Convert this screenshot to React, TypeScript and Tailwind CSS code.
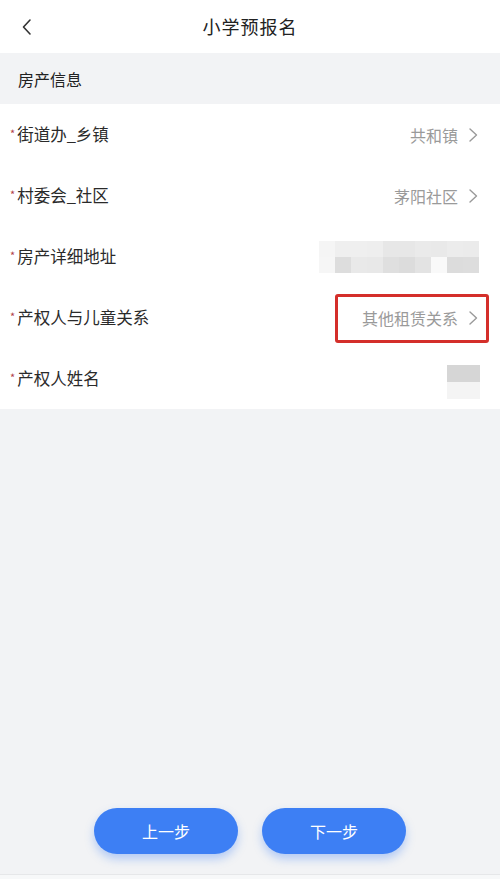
const rows = [
  { label: "街道办_乡镇", value: "共和镇" },
  { label: "村委会_社区", value: "茅阳社区" },
  { label: "房产详细地址", mosaic: "address" },
  { label: "产权人与儿童关系", value: "其他租赁关系", marked: true },
  { label: "产权人姓名", mosaic: "name" },
];

const addressCells = [
  ["#f5f5f5", "#efefef", "#efefef", "#eeeeee", "#e7e7e7", "#e7e7e7", "#eaeaea", "#e9e9e9", "#ececec", "#ebebeb"],
  ["#f6f6f6", "#dddddd", "#e9e9e9", "#e8e8e8", "#dfdfdf", "#dcdcdc", "#e3e3e3", "#f9f9f9", "#dcdcdc", "#dddddd"],
];

function Chevron() {
  return (
    <svg width="10" height="16" viewBox="0 0 10 16" fill="none" className="ml-[10px]">
      <path d="M2 2l6.5 6-6.5 6" stroke="#9a9a9a" strokeWidth="1.4" strokeLinecap="round" strokeLinejoin="round" />
    </svg>
  );
}

function AddressMosaic() {
  return (
    <div className="flex flex-col">
      {addressCells.map((line, i) => (
        <div key={i} className="flex">
          {line.map((c, j) => (
            <div key={j} className="w-[16px] h-[16px]" style={{ background: c }} />
          ))}
        </div>
      ))}
    </div>
  );
}

function NameMosaic() {
  return (
    <div className="flex flex-col">
      <div className="w-[33px] h-[17px] bg-[#d6d6d6]" />
      <div className="w-[33px] h-[17px] bg-[#f4f4f4]" />
    </div>
  );
}

export default function App() {
  return (
    <div
      className="min-h-[879px] flex flex-col bg-[#f2f3f5]"
      style={{ fontFamily: "'Noto Sans CJK SC', 'Noto Sans', sans-serif" }}
    >
      <header className="relative h-[53px] bg-white flex items-center justify-center">
        <svg width="12" height="18" viewBox="0 0 12 18" fill="none" className="absolute left-[21px] top-[18px]">
          <path d="M9 2L2.5 9 9 16" stroke="#333" strokeWidth="1.6" strokeLinecap="round" strokeLinejoin="round" />
        </svg>
        <h1 className="text-[18px] text-[#222] tracking-[1px]">小学预报名</h1>
      </header>

      <div className="h-[51px] flex items-center px-[18px] text-[16px] text-[#222]">房产信息</div>

      <div className="bg-white">
        {rows.map((r) => (
          <div key={r.label} className="h-[61px] flex items-center justify-between pl-[10px] pr-[22px]">
            <div className="flex items-center text-[16.5px] text-[#2a2a2a]">
              <span className="text-[#b0404a] text-[11px] mr-[2px] -mt-[3px]">*</span>
              {r.label}
            </div>
            {r.value && (
              <div className="relative flex items-center text-[16px] text-[#9a9a9a]">
                {r.value}
                <Chevron />
                {r.marked && (
                  <div className="absolute -left-[27px] -right-[11px] -top-[12px] -bottom-[13px] border-[3px] border-[#d42f2a] rounded-[3px]" />
                )}
              </div>
            )}
            {r.mosaic === "address" && <div className="mr-[-1px]"><AddressMosaic /></div>}
            {r.mosaic === "name" && <div className="mr-[-2px] mt-[7px]"><NameMosaic /></div>}
          </div>
        ))}
      </div>

      <div className="flex-1" />

      <div className="flex justify-center gap-[24px] pb-[20px]">
        <button className="w-[144px] h-[46px] rounded-full bg-[#3d7ff4] text-white text-[16px] shadow-[0_5px_10px_rgba(61,127,244,0.35)]">
          上一步
        </button>
        <button className="w-[144px] h-[46px] rounded-full bg-[#3d7ff4] text-white text-[16px] shadow-[0_5px_10px_rgba(61,127,244,0.35)]">
          下一步
        </button>
      </div>
      <div className="h-[5px] border-t border-[#e6e7e9] bg-[#f7f8f9]" />
    </div>
  );
}
